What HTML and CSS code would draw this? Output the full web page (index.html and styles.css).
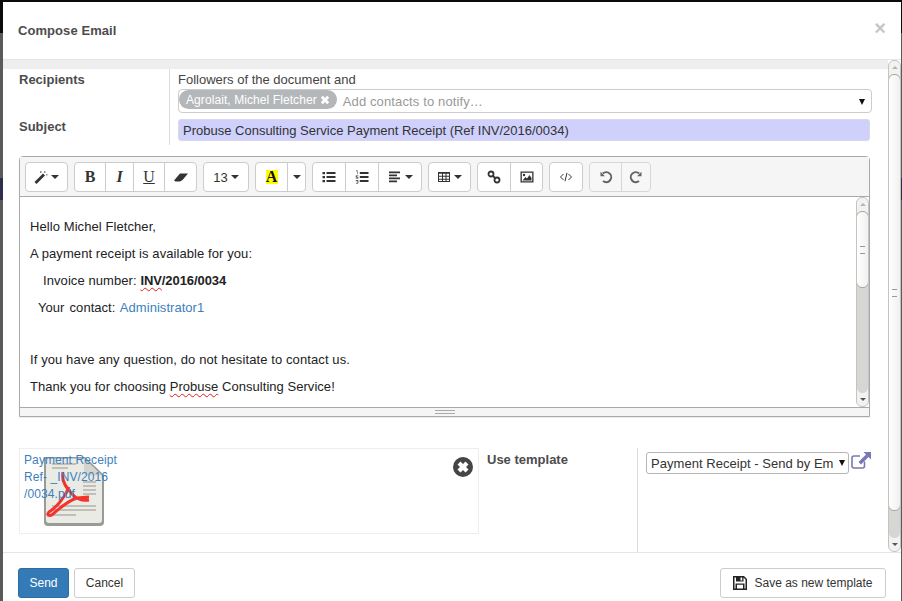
FILE: index.html
```html
<!DOCTYPE html>
<html lang="en">
<head>
  <meta charset="UTF-8">
  <meta name="viewport" content="width=device-width, initial-scale=1.0">
  <title>Compose Email</title>
  <link rel="stylesheet" href="styles.css">
</head>
<body>
<div class="modal">
  <header class="modal-header">
    <h4>Compose Email</h4>
    <span class="close">×</span>
  </header>

  <div class="modal-body">
    <div class="sheet">
      <div class="strip"></div>
      <div class="head-grid">
        <div class="labels">
          <label class="lbl">Recipients</label>
          <label class="lbl lbl-subject">Subject</label>
        </div>
        <div class="fields">
          <div class="followers">Followers of the document and</div>
          <div class="tags">
            <span class="tag">Agrolait, Michel Fletcher
              <svg class="tag-x" viewBox="0 0 10 10"><path d="M.8 2.800 2.800.8 5 3 7.200.8 9.200 2.800 7 5 9.200 7.200 7.200 9.200 5 7 2.800 9.200.8 7.200 3 5z"/></svg>
            </span>
            <span class="placeholder">Add contacts to notify…</span>
            <span class="caret-down"></span>
          </div>
          <div class="subject">Probuse Consulting Service Payment Receipt (Ref INV/2016/0034)</div>
        </div>
      </div>

      <div class="editor">
        <div class="toolbar">
          <div class="group">
            <button class="wide"><svg class="ic" viewBox="0 0 14 14"><path d="M.5 12 9 3.500l2 2L2.500 14z"/><path d="M6 1h1.500v2H6zM10 1h1.500v2H10zM12 4h1.500v1.500H12z" opacity=".55"/></svg><i class="arr"></i></button>
          </div>
          <div class="group">
            <button class="b1 serif-b">B</button>
            <button class="b2 serif-i">I</button>
            <button class="b3 serif-u">U</button>
            <button class="b4"><svg class="ic" viewBox="0 0 14 14"><path d="M0 10.500 6 3.500H14L8.500 10 6 11.500H1.500z"/></svg></button>
          </div>
          <div class="group">
            <button class="size">13<i class="arr"></i></button>
          </div>
          <div class="group">
            <button class="color"><span class="hl">A</span></button>
            <button class="color-arr"><i class="arr"></i></button>
          </div>
          <div class="group">
            <button class="list"><svg class="ic" viewBox="0 0 14 14"><path d="M.5 2h2.500v2.300H.5zM4.500 2h9v2h-9zM.5 6h2.500v2.300H.5zM4.500 6h9v2h-9zM.5 10h2.500v2.300H.5zM4.500 10h9v2h-9z"/></svg></button>
            <button class="olist"><svg class="ic" viewBox="0 0 14 14"><path d="M1 .5h1.500v3.500H2V1.200H1zM.8 5.500h2.500v.8H1.800v.6h1.500v1.600H.8v-.7h1.700v-.5H.8zM.8 10h2.500v3.500H.8v-.6h1.800v-.6H1.200v-.6h1.400v-.9H.8zM4.800 2h8.700v2H4.800zM4.800 6h8.700v2H4.800zM4.800 10h8.700v2H4.800z"/></svg></button>
            <button class="align"><svg class="ic" viewBox="0 0 14 14"><path d="M1 1.500h11v1.800H1zM1 4.500h8v1.800H1zM1 7.500h11v1.800H1zM1 10.500h8v1.800H1z"/></svg><i class="arr"></i></button>
          </div>
          <div class="group">
            <button class="wide table"><svg class="ic" viewBox="0 0 14 14"><path fill-rule="evenodd" d="M1 2h12v10H1zM2 3.800v2h3v-2zM6 3.800v2h2.500v-2zM9.500 3.800v2H12v-2zM2 6.800v2h3v-2zM6 6.800v2h2.500v-2zM9.500 6.800v2H12v-2zM2 9.800V11h3V9.800zM6 9.800V11h2.500V9.800zM9.500 9.800V11H12V9.800z"/></svg><i class="arr"></i></button>
          </div>
          <div class="group">
            <button class="link"><svg class="ic" viewBox="0 0 14 14"><circle cx="4" cy="4" r="2.500" fill="none" stroke="#333" stroke-width="1.800"/><circle cx="10" cy="10" r="2.500" fill="none" stroke="#333" stroke-width="1.800"/><path d="M5.500 5.500l3 3" stroke="#333" stroke-width="1.800"/></svg></button>
            <button class="pic"><svg class="ic" viewBox="0 0 14 14"><path fill-rule="evenodd" d="M.5 1.500h13v11H.5zM1.800 2.800v8.400h10.400V2.800z"/><path d="M2.500 10.500 5.500 7l1.500 1.500L9.500 5l2 3v2.500z"/><circle cx="4" cy="5" r="1.200"/></svg></button>
          </div>
          <div class="group">
            <button class="code"><svg class="ic" viewBox="0 0 14 14"><path d="M4.500 4 1.500 7l3 3M9.500 4l3 3-3 3M8 2.800 6 11.200" fill="none" stroke="#333" stroke-width="1"/></svg></button>
          </div>
          <div class="group faded">
            <button class="undo"><svg class="ic" viewBox="0 0 14 14"><path d="M3.800 3.500A5 5 0 1 1 4 11" fill="none" stroke="#333" stroke-width="2"/><path d="M1.500 1.800v4.400h4.400z"/></svg></button>
            <button class="redo"><svg class="ic" viewBox="0 0 14 14"><path d="M10.200 3.500A5 5 0 1 0 10 11" fill="none" stroke="#333" stroke-width="2"/><path d="M12.500 1.800v4.400H8.100z"/></svg></button>
          </div>
        </div>

        <div class="edit-wrap">
          <div class="edit-text">
            <p>Hello Michel Fletcher,</p>
            <p>A payment receipt is available for you:</p>
            <p class="ind-a">Invoice number: <strong><span class="spell">INV</span>/2016/0034</strong></p>
            <p class="ind-b">Your contact: <a>Administrator1</a></p>
            <p class="blank">&nbsp;</p>
            <p class="loose">If you have any question, do not hesitate to contact us.</p>
            <p class="tight">Thank you for choosing <span class="spell">Probuse</span> Consulting Service!</p>
          </div>
          <div class="vbar vbar-inner">
            <div class="step step-up"><i></i></div>
            <div class="track"><div class="thumb thumb-inner"><b></b></div></div>
            <div class="step step-down"><i></i></div>
          </div>
        </div>
        <div class="statusbar"><span class="grip"></span></div>
      </div>

      <div class="bottom-grid">
        <div class="attach">
          <a class="attach-name">Payment Receipt<br>Ref- _INV/2016<br>/0034.pdf</a>
          <svg class="pdf" viewBox="0 0 62 72">
            <path d="M1 2H42L61 20V67Q61 71 57 71H5Q1 71 1 67z" fill="#9b9b96"/>
            <path d="M3 3.500H41L59 20.500V65Q59 68 56 68H6Q3 68 3 65z" fill="#ebebe6"/>
            <path d="M41 3.500 59 20.500H45Q41 20.500 41 17z" fill="#d4d4ce"/>
            <path d="M9 9h24M9 13h16M40 27h13M40 31h13M40 35h13M40 39h13M9 51h44M9 55h44M9 60h24" stroke="#b2b2ab" stroke-width="1.400" fill="none"/>
            <path d="M20 17C18 25 24 34 30 40 34 44 40 46 46 45M26 32C22 42 14 52 6 57 3 60 6 62 10 59 16 54 24 46 34 43L46 42" fill="none" stroke="#f4332c" stroke-width="3"/>
          </svg>
          <svg class="attach-x" viewBox="0 0 20 20"><circle cx="10" cy="10" r="10" fill="#454545"/><path d="M4.500 7.500 7.500 4.500l2.500 2.500 2.500-2.500 3 3L13 10l2.500 2.500-3 3L10 13l-2.500 2.500-3-3L7 10z" fill="#fff"/></svg>
        </div>
        <label class="lbl lbl-template">Use template</label>
        <div class="template-cell">
          <div class="select">Payment Receipt - Send by Em<span class="caret-down caret-sel"></span></div>
          <svg class="ext" viewBox="0 0 20 18"><path d="M13.500 9.500V14a2 2 0 0 1-2 2H3a2 2 0 0 1-2-2V6a2 2 0 0 1 2-2h6" fill="none" stroke="#7a78b4" stroke-width="1.600"/><path d="M12.500 0H20V7.500L17.500 5 10 12.500 7.500 10 15 2.500z" fill="#7a78b4"/></svg>
        </div>
      </div>
    </div>

    <div class="vbar vbar-outer">
      <div class="step step-up"><i></i></div>
      <div class="track"><div class="thumb thumb-outer"><b></b></div></div>
      <div class="step step-down"><i></i></div>
    </div>
  </div>

  <footer class="modal-footer">
    <button class="btn btn-primary">Send</button>
    <button class="btn btn-cancel">Cancel</button>
    <button class="btn btn-save">
      <svg class="save-ic" viewBox="0 0 14 14"><path fill-rule="evenodd" d="M0 0H11L14 3V14H0zM1.500 1.500V12.500H2.500V7.500H11.500V12.500H12.500V3.600L10.500 1.500V5.500H3V1.500zM4 7.500V12.500H10V8.800H4zM7.500 1.500V4.500H9.200V1.500z" fill="#222"/></svg>
      Save as new template
    </button>
  </footer>
</div>
</body>
</html>
```

FILE: styles.css
```css
html, body {
  height: 100%;
}
body {
  margin: 0;
  overflow: hidden;
  font-family: "Liberation Sans", Arial, sans-serif;
  font-size: 13px;
  color: #333;
  background: linear-gradient(#0b0b0b 33px, #5a5a5a 33px, #5a5a5a 178px, #2e2e4e 178px, #2e2e4e 200px, #5a5a5a 200px);
}
button {
  font-family: inherit;
  cursor: pointer;
}

/* dialog */
.modal {
  position: absolute;
  left: 3px;
  top: 2px;
  width: 898px;
  height: 599px;
  display: flex;
  flex-direction: column;
  background: #fff;
}
.modal-header {
  flex: 0 0 58px;
  box-sizing: border-box;
  display: flex;
  justify-content: space-between;
  padding: 21px 15px 0;
  border-bottom: 1px solid #e5e5e5;
}
.modal-header h4 {
  margin: 0;
  font-size: 13px;
  line-height: 15px;
  font-weight: bold;
  color: #4c4c4c;
  letter-spacing: .07px;
}
.close {
  font-size: 20px;
  line-height: 11px;
  font-weight: bold;
  color: #c6c6c6;
}
.modal-body {
  flex: 0 0 492px;
  display: flex;
  overflow: hidden;
}
.sheet {
  width: 885px;
}
.strip {
  height: 9px;
  background: #eeeeee;
}

/* recipients + subject */
.head-grid {
  display: flex;
  height: 76px;
}
.labels {
  width: 167px;
  box-sizing: border-box;
  padding: 3px 0 0 16px;
  border-right: 1px solid #dcdcdc;
}
.lbl {
  display: block;
  font-weight: bold;
  font-size: 13px;
  line-height: 15px;
  color: #4c4c4c;
}
.lbl-subject {
  margin-top: 32px;
}
.fields {
  padding: 3px 0 0 8px;
  width: 693px;
}
.followers {
  line-height: 15px;
  color: #444;
}
.tags {
  box-sizing: border-box;
  margin-top: 2px;
  height: 24px;
  width: 694px;
  border: 1px solid #ccc;
  border-radius: 4px;
  display: flex;
  align-items: flex-start;
  position: relative;
}
.tag {
  height: 19px;
  line-height: 18px;
  box-sizing: border-box;
  padding: 0 7px;
  background: #b3b7ba;
  color: #fff;
  font-size: 12px;
  letter-spacing: .08px;
  border-radius: 10px;
  white-space: nowrap;
  display: flex;
  align-items: center;
  gap: 3px;
}
.tag-x {
  width: 10px;
  height: 10px;
  fill: #fff;
}
.placeholder {
  margin-left: 6px;
  line-height: 24px;
  color: #999;
  letter-spacing: .13px;
}
.caret-down {
  position: absolute;
  right: 6px;
  top: 9px;
  border-top: 6px solid #111;
  border-left: 3px solid transparent;
  border-right: 3px solid transparent;
}
.subject {
  box-sizing: border-box;
  margin-top: 6px;
  height: 22px;
  width: 692px;
  padding: 0 4px;
  line-height: 21px;
  background: #cfd0fb;
  border: 1px solid #d8d8e8;
  border-radius: 3px;
  color: #333;
}

/* summernote style editor */
.editor {
  box-sizing: border-box;
  margin: 11px 0 0 16px;
  width: 851px;
  border: 1px solid #a9a9a9;
  border-radius: 4px 4px 0 0;
  box-shadow: 0 1px 1px rgba(0, 0, 0, .08);
}
.toolbar {
  display: flex;
  gap: 6px;
  height: 40px;
  box-sizing: border-box;
  padding: 5px;
  background: #f5f5f5;
  border-bottom: 1px solid #a9a9a9;
}
.group {
  display: flex;
  height: 30px;
  background: #fff;
  border: 1px solid #ccc;
  border-radius: 4px;
  box-sizing: border-box;
}
.group button {
  height: 28px;
  padding: 0;
  border: 0;
  border-left: 1px solid #ccc;
  background: none;
  color: #333;
  display: flex;
  align-items: center;
  justify-content: center;
  gap: 3px;
}
.group button:first-child {
  border-left: 0;
}
.faded {
  background: #f8f8f8;
  opacity: .75;
}
.ic {
  width: 14px;
  height: 14px;
  fill: #333;
}
.arr {
  border-top: 4px solid #333;
  border-left: 4px solid transparent;
  border-right: 4px solid transparent;
  width: 0;
}
.wide { width: 41px; }
.b1 { width: 30px; }
.b2 { width: 28px; }
.b3 { width: 31px; }
.b4 { width: 32px; }
.size { width: 44px; font-size: 13px; }
.color { width: 31px; }
.color-arr { width: 18px; }
.list { width: 32px; }
.olist { width: 33px; }
.align { width: 43px; }
.link { width: 32px; }
.pic { width: 32px; }
.code { width: 32px; }
.undo { width: 31px; }
.redo { width: 29px; }
.serif-b, .serif-i, .serif-u, .hl {
  font-family: "Liberation Serif", "Times New Roman", serif;
  font-size: 16px;
}
.serif-b { font-weight: bold; }
.serif-i { font-style: italic; font-weight: bold; }
.serif-u { text-decoration: underline; }
.hl {
  display: block;
  width: 12px;
  height: 14px;
  line-height: 14px;
  background: #ff0;
  color: #111;
  font-weight: bold;
  text-align: center;
}
.edit-wrap {
  display: flex;
  height: 210px;
}
.edit-text {
  flex: 1;
  padding: 21px 10px 0;
  color: #222;
  line-height: 17px;
  letter-spacing: .08px;
}
.edit-text p {
  margin: 0 0 10px;
}
.edit-text .ind-a { padding-left: 13px; }
.edit-text .ind-b { padding-left: 8px; word-spacing: 1.500px; letter-spacing: .04px; }
.edit-text .ind-a strong { letter-spacing: -.08px; }
.edit-text .blank { margin-bottom: 8px; }
.edit-text .loose { letter-spacing: .1px; }
.edit-text .tight { letter-spacing: .04px; }
.edit-text a {
  color: #3c80bd;
}
.spell {
  text-decoration: underline wavy #e02020;
  text-decoration-thickness: 1px;
  text-underline-offset: 2px;
}
.statusbar {
  height: 8px;
  background: #f5f5f5;
  border-top: 1px solid #a9a9a9;
  display: flex;
  justify-content: center;
  align-items: center;
}
.grip {
  width: 20px;
  height: 4px;
  border-top: 1px solid #aaa;
  border-bottom: 1px solid #aaa;
  box-sizing: border-box;
  position: relative;
}

/* gtk looking scrollbars */
.vbar {
  width: 11px;
  display: flex;
  flex-direction: column;
  border: 1px solid #c4c4c0;
  border-radius: 6px;
  background: #f2f2f0;
  box-sizing: content-box;
  overflow: hidden;
}
.vbar-inner {
  height: 208px;
}
.vbar-outer {
  height: 490px;
}
.step {
  flex: 0 0 13px;
  display: flex;
  align-items: center;
  justify-content: center;
}
.step i {
  width: 0;
  border-left: 3px solid transparent;
  border-right: 3px solid transparent;
}
.step-up i { border-bottom: 3px solid #b5b5b2; }
.step-down i { border-top: 3px solid #555; }
.track {
  flex: 1;
  background: #d6d6d4;
  border-radius: 6px;
}
.thumb {
  box-sizing: border-box;
  border: 1px solid #a8a8a6;
  border-radius: 6px;
  margin: 0 -1px;
  background: linear-gradient(90deg, #fff, #f0f0ee);
  display: flex;
  align-items: center;
  justify-content: center;
}
.thumb b {
  display: block;
  width: 5px;
  height: 6px;
  border-top: 1px solid #999;
  border-bottom: 1px solid #999;
}
.thumb-inner { height: 77px; }
.thumb-outer { height: 437px; }

/* attachment + template */
.bottom-grid {
  display: flex;
  margin-top: 31px;
  height: 104px;
}
.attach {
  position: relative;
  box-sizing: border-box;
  margin-left: 16px;
  width: 460px;
  height: 86px;
  border: 1px solid #eee;
  padding: 3px 4px;
  line-height: 17px;
  font-size: 12px;
  letter-spacing: .1px;
}
.attach-name {
  color: #3c80bd;
  position: relative;
  z-index: 1;
}
.pdf {
  position: absolute;
  left: 23px;
  top: 6px;
  width: 62px;
  height: 72px;
}
.attach-x {
  position: absolute;
  left: 433px;
  top: 8px;
  width: 20px;
  height: 20px;
}
.lbl-template {
  width: 158px;
  box-sizing: border-box;
  padding: 4px 0 0 8px;
  height: 100%;
}
.template-cell {
  border-left: 1px solid #dcdcdc;
  padding: 4px 0 0 8px;
  display: flex;
  align-items: flex-start;
  gap: 2px;
  height: 100px;
}
.select {
  position: relative;
  box-sizing: border-box;
  width: 203px;
  height: 22px;
  padding: 0 4px;
  line-height: 21px;
  border: 1px solid #b5b5b5;
  border-radius: 3px;
  white-space: nowrap;
  color: #333;
  letter-spacing: .04px;
}
.caret-sel {
  right: 3px;
  top: 7px;
}
.ext {
  width: 20px;
  height: 18px;
}

/* footer */
.modal-footer {
  flex: 1;
  display: flex;
  align-items: flex-start;
  gap: 5px;
  padding: 15px 15px 0;
  border-top: 1px solid #e5e5e5;
}
.btn {
  height: 30px;
  padding: 0 10px;
  font-size: 12px;
  color: #333;
  background: #fff;
  border: 1px solid #ccc;
  border-radius: 3px;
}
.btn-primary {
  width: 51px;
  color: #fff;
  background: #337ab7;
  border-color: #2e6da4;
}
.btn-cancel {
  width: 61px;
}
.btn-save {
  margin-left: auto;
  width: 166px;
  display: flex;
  align-items: center;
  justify-content: center;
  gap: 7px;
}
.save-ic {
  width: 14px;
  height: 14px;
}
```
